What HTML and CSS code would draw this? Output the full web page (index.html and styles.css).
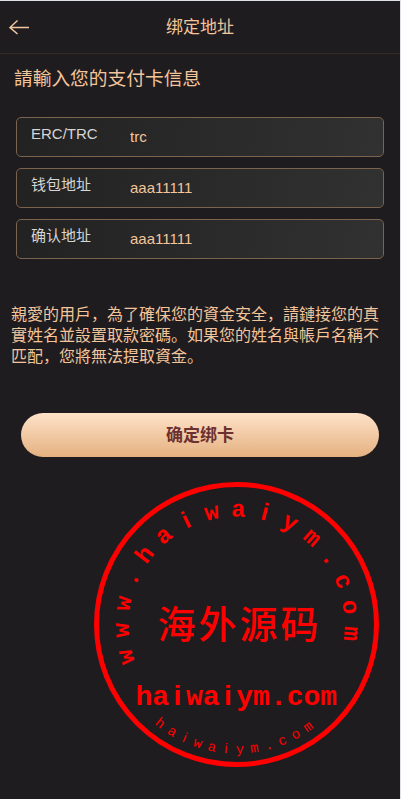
FILE: index.html
```html
<!DOCTYPE html>
<html lang="zh">
<head>
<meta charset="utf-8">
<meta name="viewport" content="width=device-width, initial-scale=1">
<title>绑定地址</title>
<link rel="stylesheet" href="styles.css">
</head>
<body>
<header class="topbar">
  <a class="back" href="#" aria-label="返回">
    <svg class="back-icon" viewBox="0 0 20 16" aria-hidden="true"><path d="M20 8.500H1M8.500 1.500L1 8.500L8.500 15"/></svg>
  </a>
  <h1 class="title">绑定地址</h1>
</header>
<main class="page">
  <h3 class="heading">請輸入您的支付卡信息</h3>
  <form class="form">
    <div class="field">
      <label class="label" for="network">ERC/TRC</label>
      <input class="value" id="network" type="text" value="trc">
    </div>
    <div class="field">
      <label class="label" for="wallet">钱包地址</label>
      <input class="value" id="wallet" type="text" value="aaa11111">
    </div>
    <div class="field">
      <label class="label" for="confirm">确认地址</label>
      <input class="value" id="confirm" type="text" value="aaa11111">
    </div>
    <p class="notice">親愛的用戶，為了確保您的資金安全，請鏈接您的真實姓名並設置取款密碼。如果您的姓名與帳戶名稱不匹配，您將無法提取資金。</p>
    <button class="submit" type="button">确定绑卡</button>
  </form>
  <svg class="stamp" viewBox="-142.5 -142.5 285 285">
    <defs>
      <path id="arc-top" d="M-101.500 37A108 108 0 1 1 104.300 28"/>
      <path id="arc-bottom" d="M-82.100 99.500A129 129 0 0 0 86.300 95.900"/>
    </defs>
    <circle class="ring" r="140"/>
    <text class="stamp-top"><textPath href="#arc-top">w<tspan dx="10.8 10.8 10.8 10.8 10.8">ww.ha</tspan><tspan class="narrow" dx="14.7">i</tspan><tspan dx="14.7 10.8">wa</tspan><tspan class="narrow" dx="14.7">i</tspan><tspan dx="14.7 10.8 10.8 10.8 10.8 10.8">ym.com</tspan></textPath></text>
    <text class="stamp-name" x="-79 -38 3 44" y="13">海外源码</text>
    <text class="stamp-site" x="-101" y="80">ha<tspan class="narrow" dx="4.5">i</tspan><tspan dx="4.5">wa</tspan><tspan class="narrow" dx="4.5">i</tspan><tspan dx="4.5">ym.com</tspan></text>
    <text class="stamp-bottom"><textPath href="#arc-bottom">h<tspan dx="6.6">a</tspan><tspan class="narrow" dx="8.8">i</tspan><tspan dx="8.8 6.6">wa</tspan><tspan class="narrow" dx="8.8">i</tspan><tspan dx="8.8 6.6 6.6 6.6 6.6 6.6">ym.com</tspan></textPath></text>
  </svg>
</main>
</body>
</html>
```
FILE: styles.css
```css
* { box-sizing: border-box; }
html { background: #1f1c1f; }
body {
  margin: 0;
  min-height: 100vh;
  background: #1f1c1f;
  border-top: 1px solid #dee1e6;
  border-right: 1px solid #dee1e6;
  color: #f3c59b;
  font-family: "Liberation Sans", "Noto Sans CJK SC", sans-serif;
  font-size: 16px;
}
.topbar {
  display: grid;
  grid-template-columns: 40px 1fr 40px;
  align-items: center;
  height: 53px;
  border-bottom: 1px solid #352a24;
}
.back { display: flex; padding-left: 9px; }
.back-icon {
  width: 20px;
  height: 16px;
  fill: none;
  stroke: #f3c59b;
  stroke-width: 1.5;
}
.title {
  margin: 0;
  padding-bottom: 3px;
  font-size: 17px;
  font-weight: 400;
  text-align: center;
}
.heading {
  margin: 0 14px 24px;
  padding-top: 10px;
  font-weight: 400;
  line-height: 29px;
}
.form { display: flex; flex-direction: column; gap: 11px; }
.field {
  display: flex;
  height: 40px;
  margin: 0 16px;
  padding-left: 14px;
  border: 1px solid #7b634d;
  border-radius: 5px;
  background: linear-gradient(100deg, #222 0%, #313131 100%);
}
.label {
  flex: 0 0 99px;
  color: #d5d5d5;
  font-size: 15px;
  line-height: 32px;
}
.value {
  flex: 1;
  min-width: 0;
  padding: 0 0 2px;
  border: 0;
  outline: 0;
  background: none;
  color: #f3c59b;
  font: 15px "Liberation Sans", "Noto Sans CJK SC", sans-serif;
}
.notice {
  margin: 33px 11px 36px;
  font-family: "Noto Sans CJK SC", sans-serif;
  line-height: 21px;
}
.submit {
  height: 44px;
  margin: 0 21px;
  padding: 0 0 3px;
  border: 0;
  border-radius: 22px;
  background: linear-gradient(#fee2c9, #e5b180);
  color: #6b3030;
  font: bold 17px "Noto Sans CJK SC", sans-serif;
}
.stamp {
  display: block;
  width: 285px;
  margin: 25px 21px 0 auto;
}
.ring { fill: none; stroke: #f00; stroke-width: 5; }
.stamp text { fill: #f00; font-family: "Liberation Mono", monospace; }
.stamp .narrow { font-family: "Liberation Sans", sans-serif; }
.stamp .stamp-top { font-size: 24px; font-weight: 700; }
.stamp .stamp-name { font-family: "Noto Sans CJK SC", sans-serif; font-size: 38px; font-weight: 500; }
.stamp .stamp-site { font-size: 28px; font-weight: 700; }
.stamp .stamp-bottom { font-size: 14px; }
```
